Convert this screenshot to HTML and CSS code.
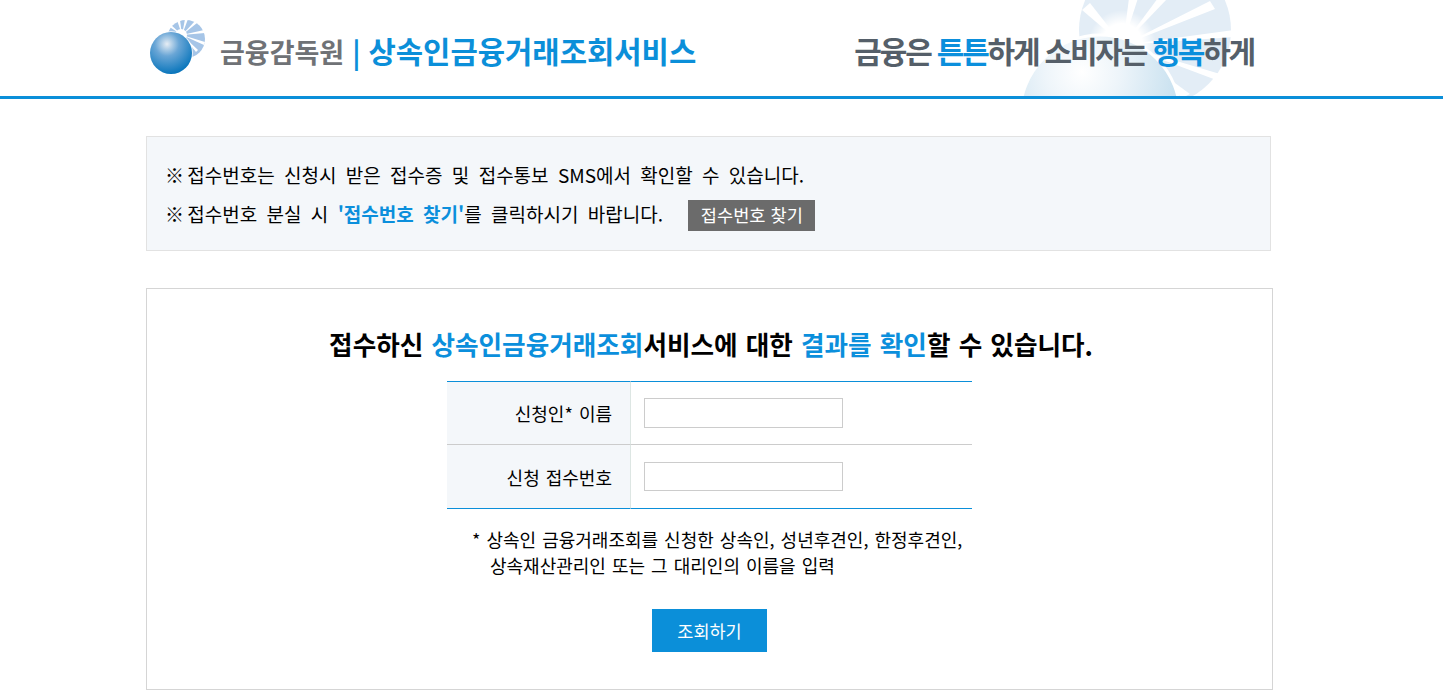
FILE: index.html
```html
<!DOCTYPE html>
<html lang="ko">
<head>
  <meta charset="UTF-8" />
  <title>상속인금융거래조회서비스</title>
  <link rel="stylesheet" href="styles.css">
</head>
<body>
  <header class="site-header">
    <div class="header-inner">
      <!-- watermark behind the slogan -->
      <svg class="watermark" width="240" height="96" viewBox="0 0 240 96" aria-hidden="true">
        <defs>
          <radialGradient id="wm-ball" gradientUnits="userSpaceOnUse" cx="80" cy="72" r="105">
            <stop offset="0" stop-color="#ffffff"/>
            <stop offset="0.35" stop-color="#eef5fa"/>
            <stop offset="1" stop-color="#c3deee"/>
          </radialGradient>
          <radialGradient id="wm-sun" gradientUnits="userSpaceOnUse" cx="120" cy="44" r="34">
            <stop offset="0.6" stop-color="#ffffff"/>
            <stop offset="1" stop-color="#ffffff" stop-opacity="0"/>
          </radialGradient>
        </defs>
        <circle cx="153" cy="30" r="76" fill="#e3edf6"/>
        <g fill="#fff">
          <polygon points="121,45 80,10 88,3"/>
          <polygon points="121,45 127,-2 136,-2"/>
          <polygon points="121,45 156,-2 166,-2"/>
          <polygon points="121,45 208,1 213,9"/>
          <polygon points="121,45 232,30 232,37"/>
          <polygon points="121,45 228,77 225,84"/>
          <polygon points="121,45 188,94 180,98"/>
        </g>
        <circle cx="120" cy="44" r="34" fill="url(#wm-sun)"/>
        <circle cx="98" cy="115" r="80" fill="url(#wm-ball)" stroke="#fff" stroke-width="3"/>
      </svg>
      <a class="logo" href="#">
        <svg class="logo-mark" width="58" height="58" viewBox="0 0 58 58" aria-hidden="true">
          <defs>
            <radialGradient id="ball" gradientUnits="userSpaceOnUse" cx="17" cy="26" r="30">
              <stop offset="0" stop-color="#e6edf4"/>
              <stop offset="0.4" stop-color="#6aa6d6"/>
              <stop offset="1" stop-color="#0a76bc"/>
            </radialGradient>
          </defs>
          <circle cx="36" cy="21" r="19" fill="#a6c5e7"/>
          <g fill="#fff">
            <polygon points="32,17 18,8 20,6"/>
            <polygon points="32,17 27,2 30,2"/>
            <polygon points="32,17 35,1 38,1"/>
            <polygon points="32,17 45,3 47,5"/>
            <polygon points="32,17 54,12 55,15"/>
            <polygon points="32,17 55,24 54,27"/>
            <polygon points="32,17 48,32 46,34"/>
          </g>
          <circle cx="31" cy="17" r="6" fill="#fff"/>
          <circle cx="21" cy="35" r="22" fill="#fff" fill-opacity="0.7"/>
          <circle cx="21" cy="35" r="21" fill="url(#ball)"/>
        </svg>
        <span class="logo-org">금융감독원</span>
        <span class="logo-bar">|</span>
        <span class="logo-title">상속인금융거래조회서비스</span>
      </a>
      <p class="slogan">금융은 <em>튼튼</em>하게 소비자는 <em>행복</em>하게</p>
    </div>
  </header>

  <main class="content">
    <section class="notice">
      <p><span class="ref-mark">※</span> 접수번호는 신청시 받은 접수증 및 접수통보 SMS에서 확인할 수 있습니다.</p>
      <p><span class="ref-mark">※</span> 접수번호 분실 시 <strong>'접수번호 찾기'</strong>를 클릭하시기 바랍니다. <a class="btn-find" href="#">접수번호 찾기</a></p>
    </section>

    <section class="lookup">
      <h2>접수하신 <em>상속인금융거래조회</em>서비스에 대한 <em>결과를 확인</em>할 수 있습니다.</h2>
      <table class="lookup-table">
        <tr>
          <th>신청인* 이름</th>
          <td><input type="text" /></td>
        </tr>
        <tr>
          <th>신청 접수번호</th>
          <td><input type="text" /></td>
        </tr>
      </table>
      <p class="lookup-note">* 상속인 금융거래조회를 신청한 상속인, 성년후견인, 한정후견인,<br>상속재산관리인 또는 그 대리인의 이름을 입력</p>
      <button class="btn-submit" type="button">조회하기</button>
    </section>
  </main>
</body>
</html>
```

FILE: styles.css
```css
* { margin: 0; padding: 0; box-sizing: border-box; }
body {
  font-family: "Noto Sans CJK KR", "Noto Sans", sans-serif;
  color: #000;
  background: #fff;
}
em { font-style: normal; color: #0b8fdc; }

/* Header */
.site-header {
  height: 99px;
  border-bottom: 3px solid #0b8fd9;
  overflow: hidden;
}
.header-inner {
  position: relative;
  width: 1127px;
  height: 96px;
  margin-left: 146px;
  display: flex;
  align-items: center;
  justify-content: space-between;
}
.watermark { position: absolute; left: 856px; top: 0; }
.logo {
  position: relative;
  display: flex;
  align-items: center;
  text-decoration: none;
  margin-left: 4px;
}
.logo-mark { margin: -2px 12px 0 0; }
.logo-org { font-size: 27px; font-weight: 700; color: #6f7276; margin-top: 7px; }
.logo-bar { font-size: 28px; font-weight: 700; color: #0b8fd9; margin: 5px 8px 0 8px; }
.logo-title { font-size: 29.7px; font-weight: 700; color: #0b8fd9; margin-top: 4px; }
.slogan {
  position: relative;
  margin: 3px 19px 0 0;
  font-size: 30px;
  font-weight: 700;
  color: #555f69;
  letter-spacing: -2.2px;
}

/* Notice box */
.content { width: 1127px; margin-left: 146px; padding-top: 37px; }
.notice {
  width: 1125px;
  height: 115px;
  padding: 18px 18px 0;
  background: #f4f7fa;
  border: 1px solid #e2e2e2;
  font-size: 19px;
  word-spacing: 4px;
}
.notice p { height: 39px; line-height: 39px; white-space: nowrap; }
.notice strong { color: #0b8fdc; }
.ref-mark { letter-spacing: -6px; }
.btn-find {
  display: inline-block;
  height: 31px;
  line-height: 30px;
  margin: 0 0 2px 16px;
  padding: 0 12.5px;
  background: #6b6b6b;
  color: #fff;
  font-size: 17.6px;
  word-spacing: 0;
  text-decoration: none;
  vertical-align: middle;
}

/* Lookup form */
.lookup {
  margin-top: 37px;
  height: 402px;
  padding-top: 36px;
  border: 1px solid #d5d5d5;
  display: flex;
  flex-direction: column;
  align-items: center;
}
.lookup h2 {
  font-size: 25.6px;
  font-weight: 700;
  line-height: 38px;
  margin-left: 3px;
  word-spacing: 1px;
  white-space: nowrap;
}
.lookup-table {
  width: 525px;
  margin-top: 18px;
  border-spacing: 0;
}
.lookup-table th,
.lookup-table td { border-top: 1px solid #ccc; }
.lookup-table tr:first-child th,
.lookup-table tr:first-child td { border-top-color: #0b8fd9; }
.lookup-table tr:last-child th,
.lookup-table tr:last-child td { border-bottom: 1px solid #0b8fd9; }
.lookup-table th {
  width: 184px;
  height: 63px;
  padding-right: 18px;
  background: #f4f7fa;
  border-right: 1px solid #dde6e3;
  font-size: 18px;
  font-weight: 400;
  text-align: right;
  word-spacing: 1px;
}
.lookup-table tr:last-child th { height: 65px; }
.lookup-table td { padding-left: 13px; }
.lookup-table input {
  display: block;
  width: 199px;
  height: 30px;
  border: 1px solid #ccc;
  background: #fff;
}
.lookup-table tr:last-child input { height: 29px; }
.lookup-note {
  width: 525px;
  margin-top: 17px;
  padding-left: 43px;
  font-size: 18px;
  line-height: 26px;
  word-spacing: 1px;
  text-indent: -18px;
  white-space: nowrap;
}
.btn-submit {
  margin-top: 31px;
  width: 115px;
  height: 43px;
  background: #0b8fd9;
  border: 0;
  color: #fff;
  font-family: inherit;
  font-size: 17.5px;
}
```
